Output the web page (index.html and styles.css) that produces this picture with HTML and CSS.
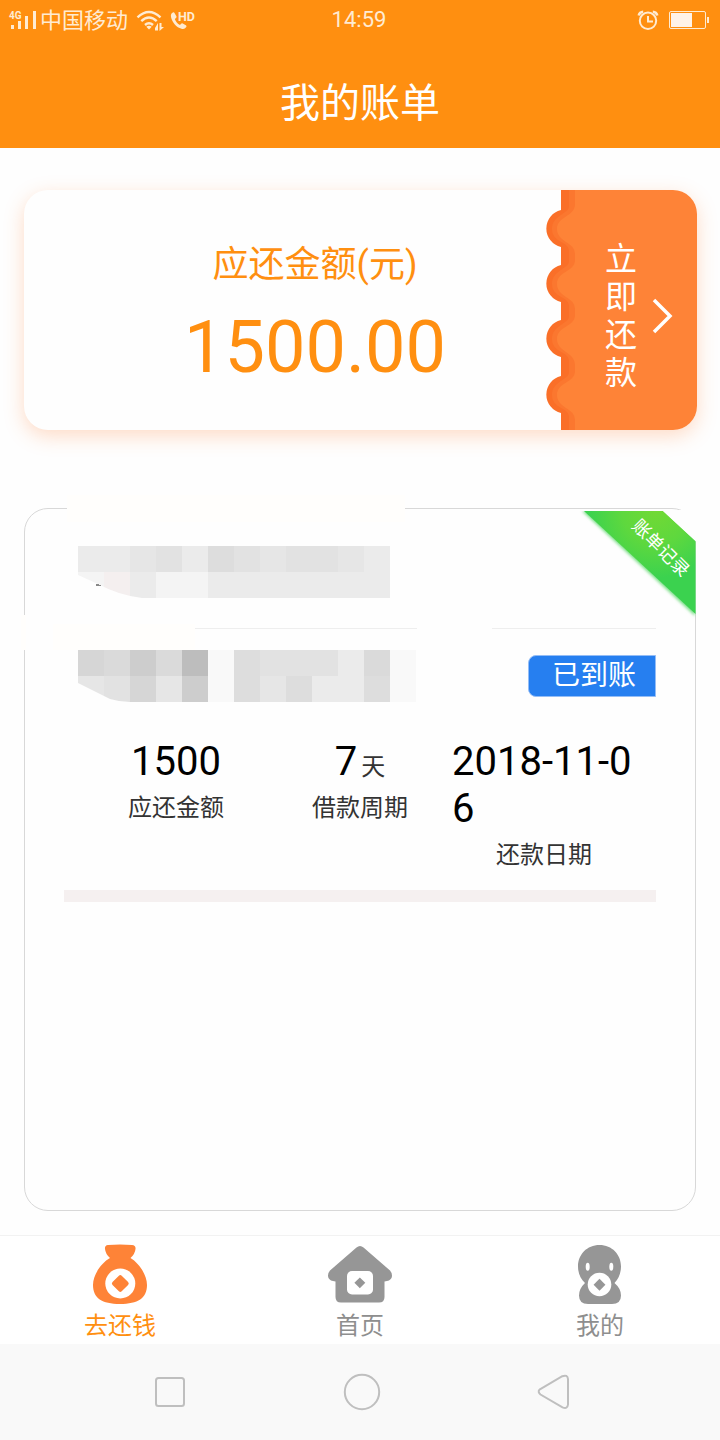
FILE: index.html
```html
<!DOCTYPE html>
<html lang="zh-CN">
<head>
<meta charset="utf-8">
<title>我的账单</title>
<link rel="stylesheet" href="styles.css">
</head>
<body>
<div class="app">
  <header class="header">
    <div class="status">
      <div class="status-left">
        <svg class="signal" width="32" height="36" viewBox="0 0 32 36">
          <text class="net" x="1" y="17">4G</text>
          <path fill="#ffebd2" d="M3 23h3v4H3zM10 19h3v8h-3zM17 14h3v13h-3zM25 9h3v18h-3z"/>
        </svg>
        <span class="carrier">中国移动</span>
        <svg class="wifi" width="30" height="36" viewBox="0 0 30 36">
          <g fill="none" stroke="#ffebd2" stroke-width="2.4">
            <path d="M1.5 15.3Q13 4.700 24.500 15.300"/>
            <path d="M5.300 19.200Q13 12 20.700 19.200"/>
            <path d="M9 23Q13 19.300 17 23"/>
          </g>
          <path fill="#ffebd2" d="M10.300 24.800Q13 22.600 15.700 24.800L13 27.500z"/>
          <path fill="#ffebd2" d="M19 26v2.500h3V21zM23.500 21v8l4.500-4h-2.500v-4z"/>
        </svg>
        <svg width="30" height="36" viewBox="0 0 30 36">
          <path fill="#ffebd2" d="M4 10.500c-1.500.500-2.500 2-2 4.500C3.200 20.500 7.500 25.500 12.500 26.700c2.500.600 4-.300 4.900-1.900.300-.600.100-1.100-.500-1.500l-3.200-1.900c-.600-.400-1.200-.200-1.600.300l-1.100 1.200c-2.500-1.200-4.300-3.400-5.200-6l1.200-1c.500-.400.700-1 .400-1.600L5.500 11c-.300-.600-.900-.800-1.500-.500z"/>
          <text class="hd" x="9" y="19">HD</text>
        </svg>
      </div>
      <div class="clock">14:59</div>
      <div class="status-right">
        <svg width="24" height="36" viewBox="0 0 24 36">
          <g fill="none" stroke="#ffebd2" stroke-width="2">
            <circle cx="12" cy="18.800" r="8.200"/>
            <path d="M12 14v5.500h5"/>
            <path stroke-width="2.500" d="M2.700 13.500Q3.500 10 7.200 9.800M21.300 13.500Q20.500 10 16.800 9.800"/>
          </g>
        </svg>
        <svg width="42" height="36" viewBox="0 0 42 36">
          <rect x="1.500" y="9.500" width="36" height="17" rx="1.500" fill="none" stroke="#ffebd2"/>
          <path fill="#fff3e8" d="M3 11h21v14H3z"/>
          <path fill="#ffebd2" d="M39 15h2v6h-2z"/>
        </svg>
      </div>
    </div>
    <h1 class="title">我的账单</h1>
  </header>

  <main class="content">
    <section class="ticket">
      <div class="amount">
        <div class="amount-label">应还金额(元)</div>
        <div class="amount-value">1500.00</div>
      </div>
      <div class="pay">
        <svg class="edge" width="34" height="240" viewBox="0 0 34 240">
          <path fill="#fa6f28" d="M19 0V20a19 19 0 0 0 0 37V75a19 19 0 0 0 0 37V130a19 19 0 0 0 0 37V186a19 19 0 0 0 0 37V240H34V0z"/>
          <path fill="#fb772f" d="M27 0V16C27 24 10 25 10 39S27 51 27 61V71C27 79 10 80 10 94S27 106 27 116V126C27 134 10 135 10 149S27 161 27 171V182C27 190 10 191 10 205S27 217 27 227V240H34V0z"/>
          <path fill="#fe8337" d="M33 0V14C33 27 15 26 15 39S33 52 33 64V70C33 82 15 81 15 94S33 107 33 119V125C33 137 15 136 15 149S33 162 33 175V181C33 193 15 192 15 205S33 218 33 230V240H34V0z"/>
        </svg>
        <div class="pay-text">立<br>即<br>还<br>款</div>
        <svg class="chevron" width="22" height="38" viewBox="0 0 22 38">
          <path fill="none" stroke="#fff" stroke-width="3.500" d="M2 3L18 19L2 35"/>
        </svg>
      </div>
    </section>

    <section class="bill">
      <span class="smear smear-top"></span>
      <span class="smear smear-left"></span>
      <svg class="ribbon" width="120" height="112" viewBox="0 0 120 112">
        <defs>
          <radialGradient id="green" gradientUnits="userSpaceOnUse" cx="80" cy="0" r="68">
            <stop offset="0" stop-color="#72d934"/>
            <stop offset="0.500" stop-color="#5ed83e"/>
            <stop offset="1" stop-color="#3bd24f"/>
          </radialGradient>
          <filter id="soft"><feGaussianBlur stdDeviation="1.800"/></filter>
        </defs>
        <path fill="#7edf8a" filter="url(#soft)" d="M6 1H86L119 31V106z"/>
        <path fill="url(#green)" d="M8 1H87L119.500 31V104z"/>
        <path fill="#fefefe" d="M0-3H120V1H0zM87 1L120 31.500V1z"/>
        <text class="ribbon-text" transform="translate(55 17) rotate(45)">账单记录</text>
      </svg>

      <div class="row name-row">
        <svg width="312" height="52" viewBox="0 0 312 52" shape-rendering="crispEdges">
          <path fill="#ebebeb" d="M0 0H312V52H0z"/>
          <path fill="#e6e6e6" d="M52 0h26v26H52zM182 0h26v26h-26zM260 0h26v26h-26z"/>
          <path fill="#e2e2e2" d="M78 0h26v26H78zM156 0h26v26h-26zM208 0h52v26h-52z"/>
          <path fill="#ddd" d="M130 0h26v26h-26z"/>
          <path fill="#f4f4f4" d="M0 26h26v26H0zM78 26h52v26H78z"/>
          <path fill="#f4efef" d="M26 26h26v26H26z"/>
          <path fill="#fefefe" shape-rendering="auto" d="M0 29L20 38Q40 49 64 52H0z"/>
          <path fill="#888" d="M18 38h3v1h2v1h-5z"/>
        </svg>
      </div>
      <div class="divider"><span class="smear smear-mid"></span></div>
      <div class="row state-row">
        <svg width="338" height="52" viewBox="0 0 338 52" shape-rendering="crispEdges">
          <path fill="#e2e2e2" d="M0 0H338V52H0z"/>
          <path fill="#d6d6d6" d="M0 0h26v26H0zM52 26h26v26H52z"/>
          <path fill="#dadada" d="M26 0h26v26H26zM78 0h26v26H78zM286 0h26v26h-26z"/>
          <path fill="#cdcdcd" d="M52 0h26v26H52zM104 26h26v26h-26z"/>
          <path fill="#bdbdbd" d="M104 0h26v26h-26z"/>
          <path fill="#f9f9f9" d="M130 0h26v52h-26zM312 0h26v52h-26z"/>
          <path fill="#ddd" d="M156 0h26v52h-26zM208 26h26v26h-26zM286 26h26v26h-26z"/>
          <path fill="#e6e6e6" d="M0 26h26v26H0zM78 26h26v26H78zM182 26h26v26h-26z"/>
          <path fill="#ebebeb" d="M260 0h26v52h-26zM234 26h26v26h-26z"/>
          <path fill="#fefefe" shape-rendering="auto" d="M0 33L32 49Q42 52 52 52H0z"/>
        </svg>
        <div class="badge">已到账</div>
      </div>
      <div class="stats">
        <div class="stat"><div class="num">1500</div><div class="cap">应还金额</div></div>
        <div class="stat"><div class="num">7<span class="unit">天</span></div><div class="cap">借款周期</div></div>
        <div class="stat"><div class="num date">2018-11-06</div><div class="cap">还款日期</div></div>
      </div>
      <div class="bar"></div>
    </section>
  </main>

  <nav class="tabs">
    <a class="tab active">
      <svg width="72" height="72" viewBox="0 0 72 72">
        <path fill="#fe8337" d="M24 9Q36 8 48 9Q52 9.500 51.500 13Q51 18 46.500 22C55 27 63 39 63 49C63 62 54 68 36 68S9 62 9 49C9 39 17 27 26 22Q21.500 18 21 13Q20.500 9.500 24 9z"/>
        <circle cx="36.300" cy="47.500" r="15" fill="#fff"/>
        <rect x="29.800" y="41" width="13" height="13" rx="2" fill="#fe8337" transform="rotate(45 36.300 47.500)"/>
      </svg>
      <span>去还钱</span>
    </a>
    <a class="tab">
      <svg width="72" height="72" viewBox="0 0 72 72">
        <path fill="#969696" d="M32.500 11.500Q36 8.500 39.500 11.500L66 34.500Q69 38 67.500 42Q66 45 60.500 45.500V61Q60.500 66.500 55 66.500H17Q11.500 66.500 11.500 61V45.500Q6 45 4.500 42Q3 38 6 34.500z"/>
        <rect x="23" y="35" width="26" height="23.500" rx="5" fill="#fff"/>
        <rect x="32" y="43" width="7.700" height="7.700" fill="#969696" transform="rotate(45 35.850 46.850)"/>
      </svg>
      <span>首页</span>
    </a>
    <a class="tab">
      <svg width="72" height="72" viewBox="0 0 72 72">
        <path fill="#969696" d="M35.500 9C48 9 57 18.500 57 30.500C57 37 54.500 43 50.500 47Q57 52.500 57 59.500Q57 68 48 68H24Q15 68 15 59.500Q15 52.500 21 47C16.500 43 14 37 14 30.500C14 18.500 23 9 35.500 9z"/>
        <ellipse cx="23.700" cy="30.800" rx="2" ry="4" fill="#fff"/>
        <ellipse cx="47.300" cy="30.800" rx="2" ry="4" fill="#fff"/>
        <circle cx="35.500" cy="48.500" r="11.800" fill="#fff"/>
        <rect x="31.300" y="44.500" width="8.400" height="8.400" fill="#969696" transform="rotate(45 35.500 48.700)"/>
      </svg>
      <span>我的</span>
    </a>
  </nav>

  <footer class="sysnav">
    <svg width="40" height="40" viewBox="0 0 40 40"><rect x="6" y="6" width="28" height="28" rx="2.500"/></svg>
    <svg width="40" height="40" viewBox="0 0 40 40"><circle cx="20" cy="20" r="17.200"/></svg>
    <svg width="40" height="40" viewBox="0 0 40 40"><path d="M5.500 17.700L28.300 4.200Q33.500 2.300 34 7V32.500Q33.500 37.500 28.500 35.300L6.500 22.500Q3.500 20 5.500 17.700z"/></svg>
  </footer>
</div>
</body>
</html>
```

FILE: styles.css
```css
* { box-sizing: border-box; }

body {
  margin: 0;
  background: #fefefe;
  font-family: Roboto, "Noto Sans CJK SC", sans-serif;
}

svg { display: block; flex: none; }

.app {
  width: 720px;
  height: 1440px;
  display: flex;
  flex-direction: column;
  overflow: hidden;
}

.header {
  height: 148px;
  background: #ff8f10;
  color: #fff;
}

.status {
  height: 36px;
  display: grid;
  grid-template-columns: 1fr 60px 1fr;
  padding: 0 10px 0 8px;
  color: #ffebd2;
}

.status-left,
.status-right {
  display: flex;
  align-items: center;
}

.status-right { justify-content: flex-end; gap: 8px; }
.carrier { font-size: 22px; line-height: 36px; padding-top: 2px; }
.wifi { margin: 0 3px 0 8px; }
.net { font: bold 10px Roboto, sans-serif; fill: #ffebd2; }
.hd { font: bold 12.500px Roboto, sans-serif; fill: #ffebd2; }

.clock {
  font-size: 22px;
  line-height: 39px;
  text-align: center;
}

.title {
  margin: 38px 0 0;
  font-size: 40px;
  line-height: 60px;
  font-weight: 400;
  text-align: center;
}

.content { flex: 1; padding: 42px 24px 0; }

.ticket {
  width: 673px;
  height: 240px;
  display: flex;
  border-radius: 24px;
  background: #fefefe;
  box-shadow: 0 6px 20px rgba(254, 131, 55, 0.28);
}

.amount {
  width: 518px;
  padding: 47px 0 0 64px;
  color: #ff8f10;
  text-align: center;
}

.amount-label { font-size: 36px; line-height: 56px; }
.amount-value { font-size: 72px; line-height: 84px; margin-top: 13px; }

.pay {
  flex: 1;
  display: flex;
  align-items: center;
  color: #fff;
  border-radius: 0 24px 24px 0;
  background: linear-gradient(90deg, transparent 33px, #fe8337 33px);
}

.pay-text {
  width: 32px;
  margin: 12px 0 0 29px;
  font-size: 32px;
  line-height: 38px;
}

.chevron { margin: 12px 0 0 15px; }

.bill {
  position: relative;
  height: 703px;
  margin-top: 78px;
  padding: 37px 39px 0;
  border: 1px solid #d8d8d8;
  border-radius: 24px;
}

.smear { position: absolute; background: #fffefc; }
.smear-top { left: 42px; top: -14px; width: 338px; height: 27px; }
.smear-left { left: -4px; top: 106px; width: 5px; height: 35px; }
.smear-mid { left: -11px; top: -4px; width: 142px; height: 26px; }

.ribbon { position: absolute; right: -1px; top: 1px; }
.ribbon-text { font-size: 18px; fill: #fff; }

.row { display: flex; padding-left: 14px; }
.name-row { height: 82px; }

.divider {
  position: relative;
  height: 1px;
  background: linear-gradient(90deg, #eee 353px, transparent 353px 428px, #eee 428px);
}

.state-row { justify-content: space-between; margin-top: 21px; height: 52px; }

.badge {
  width: 128px;
  height: 42px;
  margin-top: 5px;
  padding-left: 4px;
  border: 1px solid #94bdf6;
  border-radius: 8px 0 0 8px;
  background: #267ff0;
  color: #fff;
  font-size: 28px;
  line-height: 40px;
  text-align: center;
}

.stats {
  display: grid;
  grid-template-columns: repeat(3, 184px);
  margin-top: 36px;
  padding-left: 20px;
  color: #333;
  text-align: center;
}

.num { color: #000; font-size: 40px; line-height: 47px; }
.date { text-align: left; word-break: break-all; }
.unit { color: #333; font-size: 24px; line-height: 1; margin-left: 4px; }
.cap { font-size: 24px; line-height: 46px; }
.bar { height: 12px; margin-top: 12px; background: #f5f0f0; }

.tabs {
  height: 109px;
  display: grid;
  grid-template-columns: repeat(3, 1fr);
  border-top: 1px solid #f2f2f2;
  background: #fff;
}

.tab {
  display: flex;
  flex-direction: column;
  align-items: center;
  color: #8e8e8e;
  font-size: 24px;
  line-height: 36px;
}

.active { color: #ff8f10; }

.sysnav {
  height: 96px;
  display: flex;
  justify-content: space-between;
  align-items: center;
  padding: 0 146px 0 150px;
  background: #f9f9f9;
}

.sysnav svg { fill: none; stroke: #bfbfbf; stroke-width: 2; }
```
